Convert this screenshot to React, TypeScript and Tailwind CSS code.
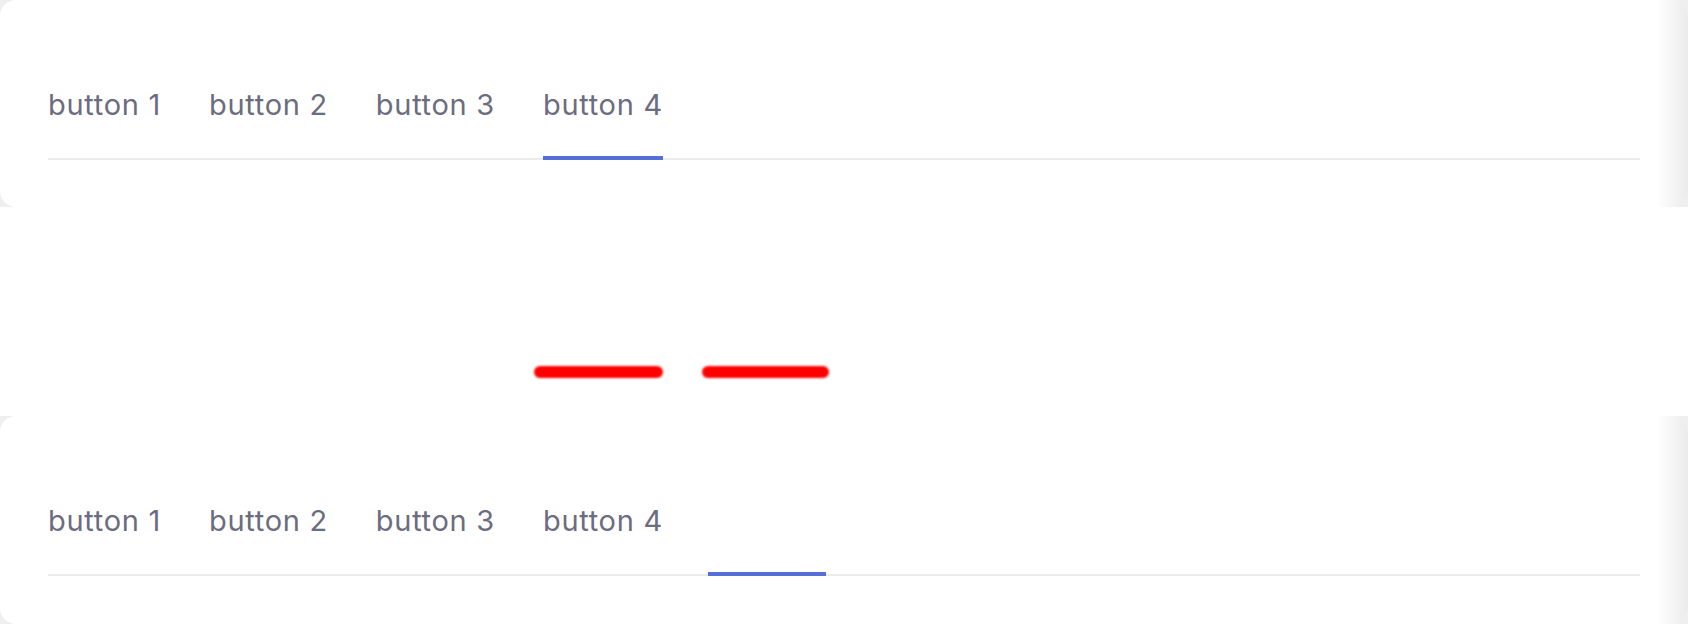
import React from 'react';

const tabs = ['button 1', 'button 2', 'button 3', 'button 4'];

interface TabCardProps {
  active?: number;
  barLeft?: number;
  height: string;
}

const TabCard: React.FC<TabCardProps> = ({ active, barLeft, height }) => {
  return (
    <div className={`bg-[#efefef] ${height}`}>
      <div className="relative h-full rounded-2xl bg-white px-12 pt-[88px] overflow-hidden">
        <div className="relative flex gap-[48px] border-b-2 border-[#ebebeb]">
          {tabs.map((t, i) => (
            <div
              key={t}
              className="relative pb-9 text-[29px] leading-[34px] tracking-[0.7px] text-[#6c6c80]"
            >
              {t}
              {active === i && (
                <div className="absolute left-0 right-0 -bottom-[2px] h-1 bg-[#5470d6]" />
              )}
            </div>
          ))}
          {barLeft !== undefined && (
            <div
              className="absolute -bottom-[2px] h-1 w-[118px] bg-[#5470d6]"
              style={{ left: barLeft }}
            />
          )}
        </div>
        <div className="absolute right-0 top-0 bottom-0 w-[31px] bg-linear-to-r from-white to-[#ebebeb]" />
      </div>
    </div>
  );
};

export default function App() {
  return (
    <div className="w-[1688px] h-[624px] overflow-hidden bg-white font-['Inter',sans-serif]">
      <TabCard active={3} height="h-[207px]" />
      <div className="h-[209px] flex items-start gap-[39px] pl-[534px] pt-[159px]">
        <div className="h-3 w-[129px] rounded-md bg-[#ff0000] blur-[1px]" />
        <div className="h-3 w-[127px] rounded-md bg-[#ff0000] blur-[1px]" />
      </div>
      <TabCard barLeft={660} height="h-[208px]" />
    </div>
  );
}
